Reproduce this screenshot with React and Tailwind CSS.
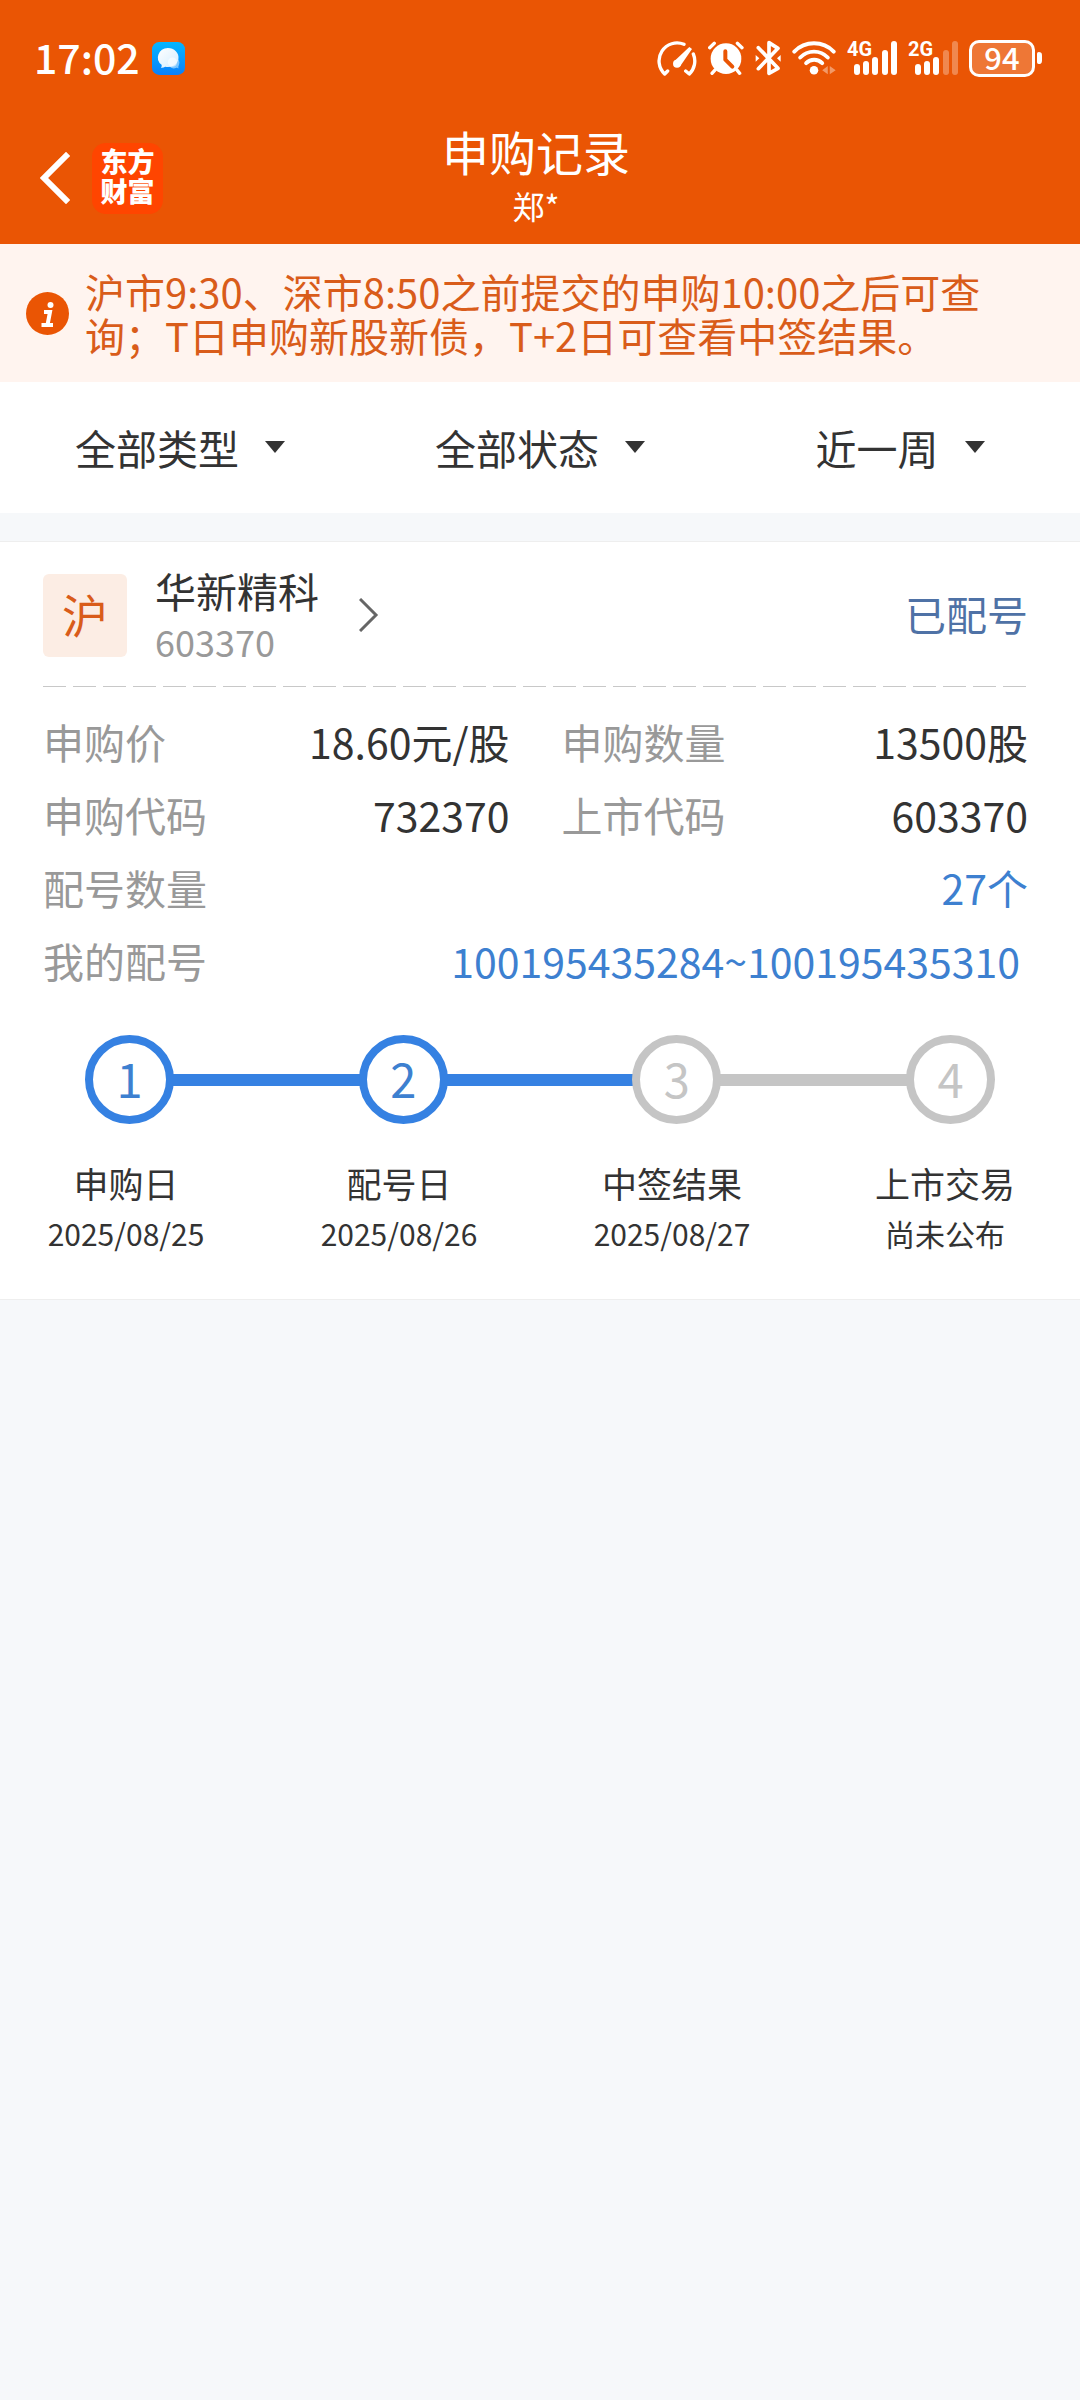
import React from "react";

function GaugeIcon() {
  return (
    <svg width="40" height="35" viewBox="47 61 120 105" fill="none" stroke="#fff" strokeWidth="10" strokeLinecap="round" strokeLinejoin="round" aria-hidden="true">
      <path d="M79 151 L70 160 A54 54 0 0 1 128 71" />
      <path d="M156 100 A54 54 0 0 1 144 160 L133 151" />
      <circle cx="107" cy="129" r="12" fill="#fff" stroke="none" />
      <path d="M97 123 L144 79 L152 85 L117 136 Z" fill="#fff" stroke="none" />
    </svg>
  );
}

function AlarmIcon() {
  return (
    <svg width="36" height="35" viewBox="202 64 108 105" fill="none" stroke="#fff" strokeWidth="10" strokeLinecap="round" aria-hidden="true">
      <circle cx="256" cy="117" r="46" fill="#fff" stroke="none" />
      <path d="M207 84 L221 71 M290 71 L304 84 M224 150 L214 161 M288 150 L297 161" />
      <path d="M254 95 V120 L275 141" stroke="#ea5504" strokeWidth="12" strokeLinejoin="round" />
    </svg>
  );
}

function BluetoothIcon() {
  return (
    <svg width="26" height="36" viewBox="341 62 78 108" fill="none" stroke="#fff" strokeWidth="11" strokeLinecap="round" strokeLinejoin="round" aria-hidden="true">
      <path d="M351 85 L410 147 L383 162 V70 L410 87 L351 148" />
      <path d="M343 107 L354 117 L343 127 Z M418 107 L407 117 L418 127 Z" fill="#fff" stroke="none" />
    </svg>
  );
}

function WifiIcon() {
  return (
    <svg width="44" height="35" viewBox="446 61 134 106" fill="none" stroke="#fff" strokeWidth="12" strokeLinecap="round" aria-hidden="true">
      <path d="M453 93 A84 84 0 0 1 573 93" />
      <path d="M471 111 A58 58 0 0 1 555 111" />
      <path d="M489 128 A34 34 0 0 1 538 128" />
      <circle cx="513" cy="150" r="13" fill="#fff" stroke="none" />
      <path d="M555 137 V162 L538 150 Z M561 137 V162 L579 150 Z" fill="#fff" fillOpacity="0.4" stroke="none" />
    </svg>
  );
}

const BARS = [
  { x: 7, y: 23 },
  { x: 16, y: 20 },
  { x: 25, y: 16 },
  { x: 35, y: 9 },
  { x: 44, y: 0 },
];

function Signal({ label, strength }) {
  return (
    <div className="relative h-[34px] w-[50px]">
      <span className="absolute left-0 top-0 font-['Roboto',sans-serif] text-[20px] leading-[17px] font-bold">{label}</span>
      <svg width="50" height="34" viewBox="0 0 50 34" fill="#fff" aria-hidden="true">
        {BARS.map((b, i) => (
          <rect key={b.x} x={b.x} y={b.y} width="6" height={34 - b.y} rx="3" fillOpacity={i < strength ? 1 : 0.3} />
        ))}
      </svg>
    </div>
  );
}

function Battery() {
  return (
    <div className="flex items-center gap-[2px]">
      <div className="flex h-[37px] w-[66px] items-center justify-center rounded-[10px] border-[3px] border-white bg-white/20 pb-1 text-[31px] leading-[31px] font-medium">
        94
      </div>
      <div className="h-3 w-[5px] rounded-r-[4px] rounded-l-[2px] bg-white" />
    </div>
  );
}

function MessageIcon() {
  return (
    <svg width="33" height="33" viewBox="0 0 100 100" aria-hidden="true">
      <defs>
        <linearGradient id="msgBg" x1="0" y1="0" x2="0" y2="1">
          <stop offset="0" stopColor="#04b6ff" />
          <stop offset="1" stopColor="#0a80fb" />
        </linearGradient>
        <linearGradient id="msgBubble" x1="0" y1="0" x2="1" y2="1">
          <stop offset="0" stopColor="#ffffff" />
          <stop offset="1" stopColor="#d3ecff" />
        </linearGradient>
      </defs>
      <rect width="100" height="100" rx="22" fill="url(#msgBg)" />
      <circle cx="66" cy="63" r="17" fill="#7cc6ff" />
      <path d="M70 74 L80 80 L80 68 Z" fill="#7cc6ff" />
      <path d="M48 18 A32 29 0 1 1 40 75 Q34 79 27 78 Q31 73 29 69 A32 29 0 0 1 48 18 Z" fill="url(#msgBubble)" />
      <circle cx="62" cy="61" r="14" fill="#ffffff" fillOpacity="0.55" />
    </svg>
  );
}

function StatusBar() {
  return (
    <div className="flex h-[116px] items-center justify-between pr-[38px] pl-[34px]">
      <div className="flex items-center gap-3">
        <span className="pb-1 text-[41px] leading-[42px] font-medium">17:02</span>
        <MessageIcon />
      </div>
      <div className="flex items-center gap-[11px]">
        <GaugeIcon />
        <AlarmIcon />
        <BluetoothIcon />
        <WifiIcon />
        <Signal label="4G" strength={5} />
        <Signal label="2G" strength={3} />
        <Battery />
      </div>
    </div>
  );
}

function NavBar() {
  return (
    <div className="grid h-32 grid-cols-[1fr_auto_1fr] items-center pr-12 pb-1 pl-10">
      <div className="flex items-center gap-[22px]">
        <button type="button" aria-label="返回">
          <svg width="30" height="52" viewBox="0 0 30 52" fill="none" stroke="#fff" strokeWidth="6" strokeLinecap="square" strokeLinejoin="miter" aria-hidden="true">
            <path d="M26 4 L4 26 L26 48" />
          </svg>
        </button>
        <div className="flex size-[71px] items-center justify-center rounded-[14px] bg-[#ff4500] pb-1">
          <p className="w-[54px] text-[27px] leading-[30px] font-black">东方财富</p>
        </div>
      </div>
      <div className="text-center">
        <h1 className="text-[47px] leading-[54px]">申购记录</h1>
        <p className="text-[32px] leading-[54px]">郑*</p>
      </div>
    </div>
  );
}

function Notice() {
  return (
    <div className="flex items-center gap-4 bg-[#fff4ef] py-[25px] pr-[84px] pl-[26px] text-[#d95c1a]">
      <svg className="shrink-0" width="43" height="43" viewBox="0 0 43 43" aria-hidden="true">
        <circle cx="21.5" cy="21.5" r="21.5" fill="#ea5504" />
        <circle cx="24.5" cy="13" r="3" fill="#fff" />
        <path d="M18 20 H24 L21.5 33 M15.5 33 H27" fill="none" stroke="#fff" strokeWidth="4" />
      </svg>
      <p className="flex-1 text-[40px] leading-[44px]">沪市9:30、深市8:50之前提交的申购10:00之后可查询；T日申购新股新债，T+2日可查看中签结果。</p>
    </div>
  );
}

const FILTERS = [
  { name: "类型", options: ["全部类型", "新股申购", "新债申购"] },
  { name: "状态", options: ["全部状态", "已配号", "已中签"] },
  { name: "时间", options: ["近一周", "近一月", "近一年"] },
];

function Filters() {
  return (
    <div className="grid grid-cols-3 bg-white pt-9 pb-[37px]">
      {FILTERS.map((f) => (
        <label key={f.name} className="flex items-center justify-center gap-[26px]">
          <select aria-label={f.name} className="field-sizing-content appearance-none bg-transparent text-[41px] leading-[58px] text-[#333]">
            {f.options.map((o) => (
              <option key={o}>{o}</option>
            ))}
          </select>
          <svg width="20" height="12" viewBox="0 0 20 12" fill="#333" aria-hidden="true">
            <path d="M0 0 H20 L10 12 Z" />
          </svg>
        </label>
      ))}
    </div>
  );
}

function Field({ label, value, wide, blue, inset }) {
  return (
    <div className={wide ? "col-span-2 flex justify-between" : "flex justify-between"}>
      <dt className="text-[#999]">{label}</dt>
      <dd className={blue ? (inset ? "pr-2 text-[#3d80d0]" : "text-[#3d80d0]") : "text-[#333]"}>{value}</dd>
    </div>
  );
}

const STEPS = [
  { title: "申购日", date: "2025/08/25", done: true },
  { title: "配号日", date: "2025/08/26", done: true },
  { title: "中签结果", date: "2025/08/27", done: false },
  { title: "上市交易", date: "尚未公布", done: false },
];

function Steps() {
  return (
    <div>
      <div className="flex items-center pr-[33px] pl-[42px]">
        {STEPS.map((s, i) => (
          <React.Fragment key={s.title}>
            {i > 0 && <div className={STEPS[i - 1].done ? "-mx-1 h-3 flex-1 bg-[#3581e2]" : "-mx-1 h-3 flex-1 bg-[#c5c5c5]"} />}
            <div
              className={
                s.done
                  ? "relative flex size-[89px] items-center justify-center rounded-full border-8 border-[#3581e2] bg-white pb-1 text-[47px] leading-[47px] text-[#3d80d0]"
                  : "relative flex size-[89px] items-center justify-center rounded-full border-8 border-[#c5c5c5] bg-white pb-1 text-[47px] leading-[47px] text-[#c5c5c5]"
              }
            >
              {i + 1}
            </div>
          </React.Fragment>
        ))}
      </div>
      <ol className="flex justify-between pt-[34px] text-[#333]">
        {STEPS.map((s) => (
          <li key={s.title} className="w-[166px] text-center">
            <div className="text-[35px] leading-[50px]">{s.title}</div>
            <div className="text-[30px] leading-[50px]">{s.date}</div>
          </li>
        ))}
      </ol>
    </div>
  );
}

function RecordCard() {
  return (
    <article className="mt-7 border-y border-[#eee] bg-white pr-[52px] pb-[41px] pl-[43px]">
      <div className="flex items-center pt-[22px] pb-5">
        <div className="flex h-[83px] w-[84px] items-center justify-center rounded-[6px] bg-[#fcede4] pb-1 text-[46px] leading-[46px] text-[#d95c1a]">沪</div>
        <button type="button" className="ml-7 flex items-center gap-10 text-left">
          <span className="block">
            <span className="block text-[41px] leading-[52px] text-[#333]">华新精科</span>
            <span className="block text-[36px] leading-[50px] text-[#999]">603370</span>
          </span>
          <svg width="21" height="34" viewBox="0 0 21 34" fill="none" stroke="#666" strokeWidth="3" aria-hidden="true">
            <path d="M1 1 L17 17 L1 33" />
          </svg>
        </button>
        <span className="ml-auto pb-1 text-[41px] leading-[52px] text-[#4f72a6]">已配号</span>
      </div>
      <div className="h-px bg-[repeating-linear-gradient(90deg,#c8c8c8_0_23px,transparent_23px_30px)]" />
      <dl className="grid grid-cols-2 gap-x-[52px] pt-[18px] text-[41px] leading-[73px]">
        <Field label="申购价" value="18.60元/股" />
        <Field label="申购数量" value="13500股" />
        <Field label="申购代码" value="732370" />
        <Field label="上市代码" value="603370" />
        <Field label="配号数量" value="27个" wide blue />
        <Field label="我的配号" value="100195435284~100195435310" wide blue inset />
      </dl>
      <div className="pt-[38px]">
        <Steps />
      </div>
    </article>
  );
}

export default function App() {
  return (
    <div className="min-h-screen bg-[#f6f8fa] font-['Noto_Sans_CJK_SC',sans-serif]">
      <header className="bg-[#ea5504] text-white">
        <StatusBar />
        <NavBar />
      </header>
      <main>
        <Notice />
        <Filters />
        <RecordCard />
      </main>
    </div>
  );
}
